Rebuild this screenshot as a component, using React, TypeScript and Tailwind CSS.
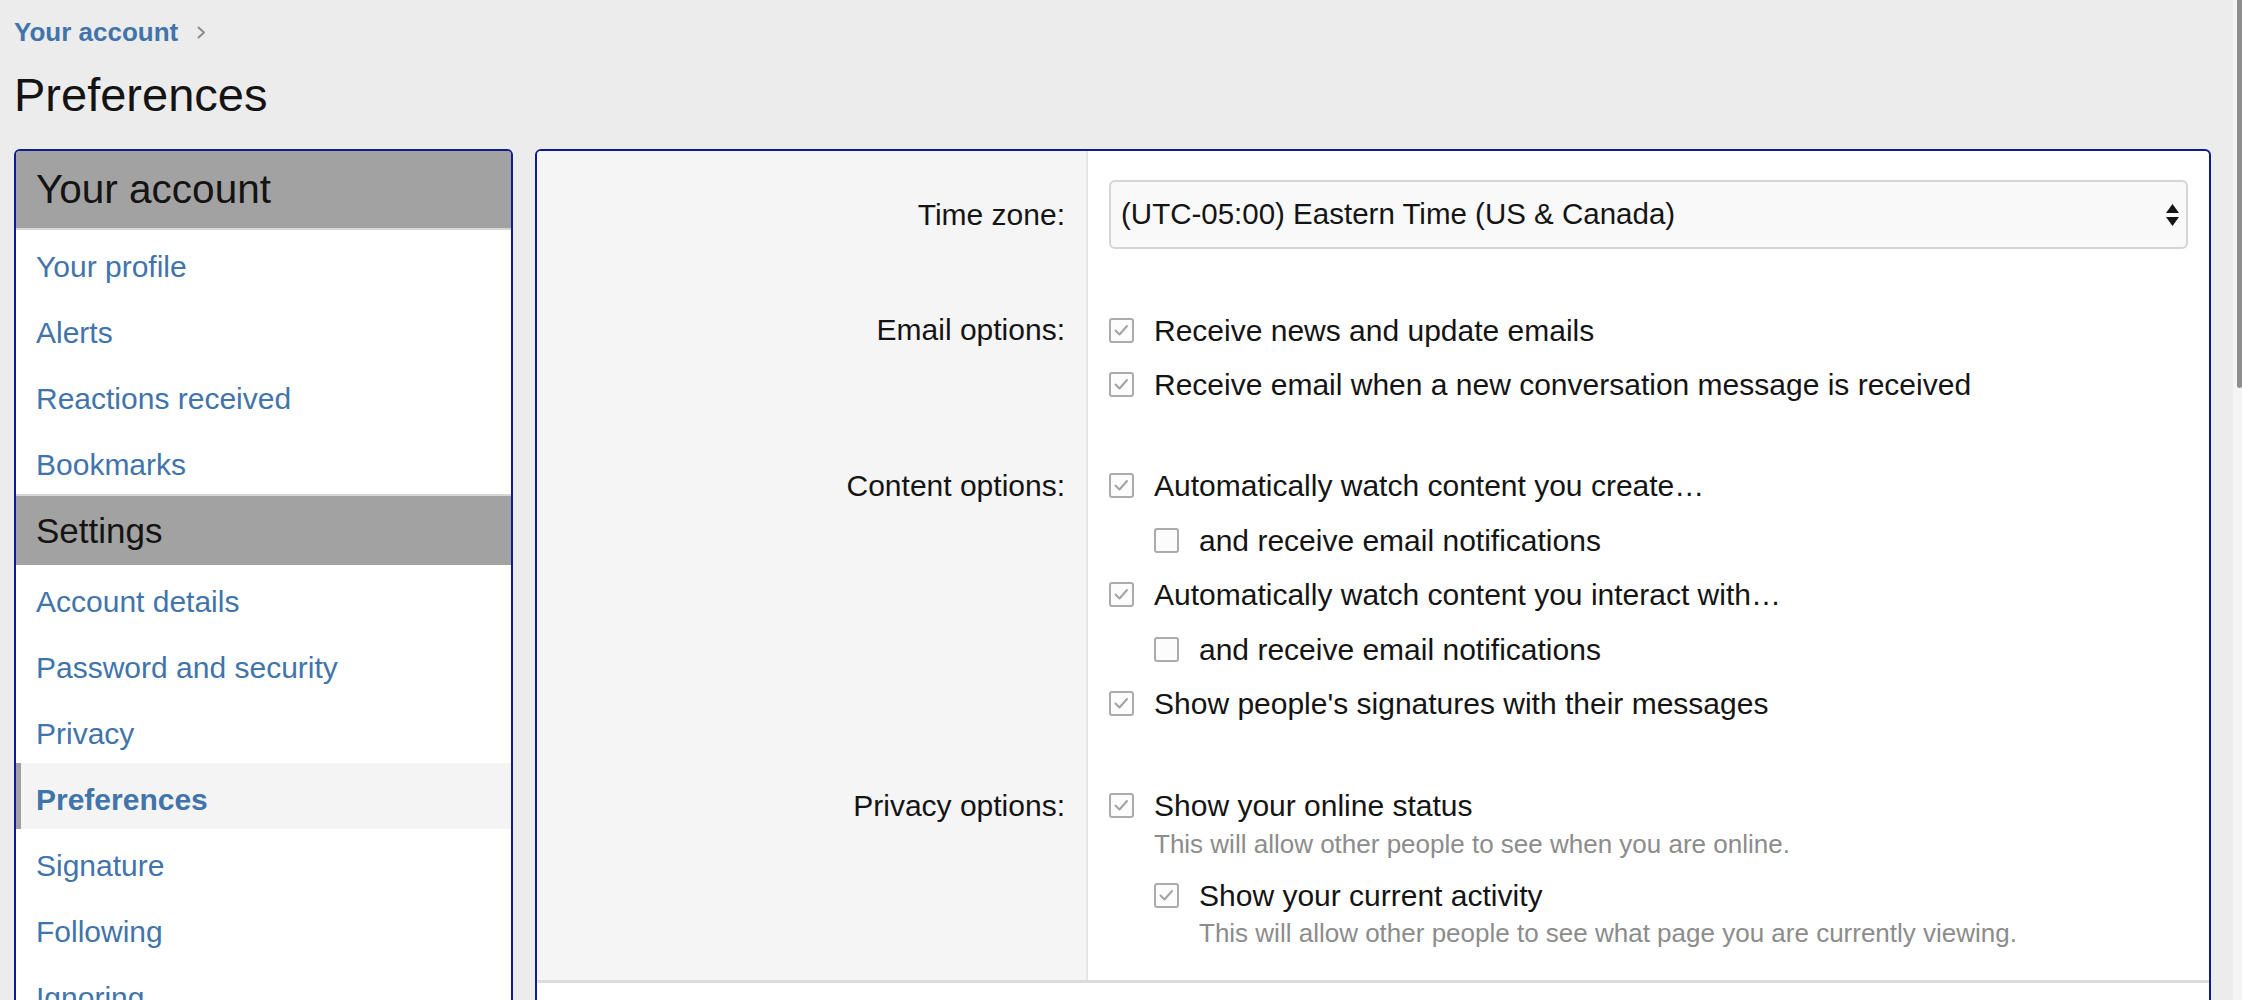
import React from 'react';

const navItems = [
  { title: 'Your account', size: 'text-[40.5px]', height: 'h-[79px]', links: ['Your profile', 'Alerts', 'Reactions received', 'Bookmarks'] },
  {
    title: 'Settings',
    size: 'text-[35px]',
    height: 'h-[71px]',
    links: ['Account details', 'Password and security', 'Privacy', 'Preferences', 'Signature', 'Following', 'Ignoring'],
  },
];

const Check = ({ on }: { on: boolean }) => (
  <span className="flex h-[25px] w-[25px] shrink-0 items-center justify-center rounded-[3px] border-2 border-[#ababab] bg-[#fcfcfc]">
    {on && (
      <svg width="21" height="21" viewBox="0 0 21 21" fill="none">
        <path d="M4.5 10.5 L8.5 14.5 L16 6" stroke="#a2a2a2" strokeWidth="2" strokeLinecap="round" strokeLinejoin="round" />
      </svg>
    )}
  </span>
);

type OptProps = { label: string; on: boolean; hint?: string; children?: React.ReactNode };

const Opt = ({ label, on, hint, children }: OptProps) => (
  <li>
    <label className="flex h-[38px] items-center gap-[20px]">
      <Check on={on} />
      <span>{label}</span>
    </label>
    {hint && <p className="mt-[3px] pl-[45px] text-[26px] leading-[32px] text-[#8c8c8c]">{hint}</p>}
    {children && <ul className="mt-[16.5px] flex flex-col gap-[16.5px] pl-[45px]">{children}</ul>}
  </li>
);

type RowProps = { label: string; pad: string; labelPad?: string; children: React.ReactNode };

const Row = ({ label, pad, labelPad = '', children }: RowProps) => (
  <div className="grid grid-cols-[551px_1fr]">
    <div className={`border-r-2 border-[#e6e6e6] bg-[#f5f5f5] pr-[21px] text-right leading-[38px] ${pad}`}>
      <div className={labelPad}>{label}</div>
    </div>
    <div className={`pl-[21px] pr-[21px] ${pad}`}>{children}</div>
  </div>
);

const App = () => {
  return (
    <div className="flex h-screen overflow-hidden bg-[#ececec] font-['Liberation_Sans',Arial,sans-serif] text-[#141414]">
      <div className="flex-1 pl-[14px] pr-[22px] pt-[17px]">
        {/* Breadcrumb + title */}
        <div className="flex h-[30px] items-center">
          <a className="text-[26px] font-bold text-[#4174aa]">Your account</a>
          <svg className="ml-[19px]" width="9" height="13" viewBox="0 0 9 13" fill="none">
            <path d="M1.5 1.5 L7 6.5 L1.5 11.5" stroke="#8c8c8c" strokeWidth="2" strokeLinecap="round" strokeLinejoin="round" />
          </svg>
        </div>
        <h1 className="mt-[19.5px] text-[47px] leading-[56px]">Preferences</h1>

        <div className="mt-[26.5px] flex items-start gap-[22px]">
          {/* Sidebar */}
          <nav className="w-[499px] shrink-0 overflow-hidden rounded-[6px] border-2 border-[#101c8c] bg-white">
            {navItems.map((sec, si) => (
              <div key={sec.title}>
                <h3
                  className={`flex items-center bg-[#a2a2a2] pl-[20px] ${sec.height} ${sec.size} ${
                    si === 0 ? 'border-b-2 border-[#d6d6d6]' : 'border-t-2 border-[#d6d6d6] pt-[2px]'
                  }`}
                >
                  {sec.title}
                </h3>
                {sec.links.map((l) => {
                  const active = l === 'Preferences';
                  return (
                    <a
                      key={l}
                      className={`flex h-[66px] items-center pt-[6px] text-[30px] text-[#4174aa] ${
                        active ? 'border-l-[5px] border-[#a0a0a0] bg-[#f4f4f4] pl-[15px] font-bold' : 'pl-[20px]'
                      }`}
                    >
                      {l}
                    </a>
                  );
                })}
              </div>
            ))}
          </nav>

          {/* Main form */}
          <div className="flex-1 overflow-hidden rounded-t-[6px] border-2 border-[#101c8c] bg-white text-[30px]">
            <Row label="Time zone:" pad="pt-[29px] pb-[31px]" labelPad="pt-[16px]">
              <div className="flex h-[69px] items-center justify-between rounded-[6px] border-2 border-[#d5d5d5] bg-[#f9f9f9] pl-[10px] pr-[7px] text-[29.5px]">
                <span>(UTC-05:00) Eastern Time (US &amp; Canada)</span>
                <svg width="13" height="22" viewBox="0 0 13 22">
                  <path d="M6.5 0 L13 9 L0 9 Z" fill="#151515" />
                  <path d="M0 13 L13 13 L6.5 22 Z" fill="#151515" />
                </svg>
              </div>
            </Row>
            <Row label="Email options:" pad="pt-[31px] pb-[31px]">
              <ul className="flex flex-col gap-[16.5px]">
                <Opt on label="Receive news and update emails" />
                <Opt on label="Receive email when a new conversation message is received" />
              </ul>
            </Row>
            <Row label="Content options:" pad="pt-[32px] pb-[32px]">
              <ul className="flex flex-col gap-[16.5px]">
                <Opt on label="Automatically watch content you create…">
                  <Opt on={false} label="and receive email notifications" />
                </Opt>
                <Opt on label="Automatically watch content you interact with…">
                  <Opt on={false} label="and receive email notifications" />
                </Opt>
                <Opt on label="Show people's signatures with their messages" />
              </ul>
            </Row>
            <Row label="Privacy options:" pad="pt-[32px] pb-[31px]">
              <ul className="flex flex-col gap-[16.5px]">
                <Opt on label="Show your online status" hint="This will allow other people to see when you are online.">
                  <Opt
                    on
                    label="Show your current activity"
                    hint="This will allow other people to see what page you are currently viewing."
                  />
                </Opt>
              </ul>
            </Row>
            <div className="h-[120px] border-t-[3px] border-[#dcdcdc] bg-white" />
          </div>
        </div>
      </div>

      {/* Scrollbar */}
      <div className="flex w-[9px] shrink-0 justify-end bg-[#f4f4f4]">
        <div className="h-[388px] w-[5px] rounded-b-full bg-[#8e8e8e]" />
      </div>
    </div>
  );
};

export default App;
